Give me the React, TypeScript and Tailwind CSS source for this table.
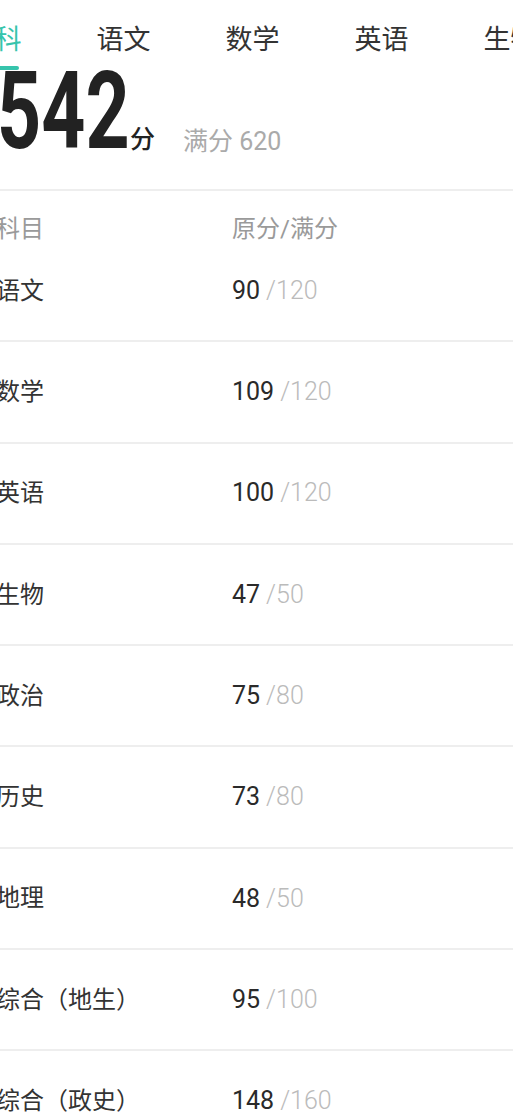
const tabs = ['全科', '语文', '数学', '英语', '生物', '政治'];

const rows = [
  { name: '语文', score: 90, full: 120 },
  { name: '数学', score: 109, full: 120 },
  { name: '英语', score: 100, full: 120 },
  { name: '生物', score: 47, full: 50 },
  { name: '政治', score: 75, full: 80 },
  { name: '历史', score: 73, full: 80 },
  { name: '地理', score: 48, full: 50 },
  { name: '综合（地生）', score: 95, full: 100 },
  { name: '综合（政史）', score: 148, full: 160 },
];

export default function App() {
  return (
    <div
      className="w-[513px] h-[1112px] overflow-hidden bg-white text-[#333]"
      style={{ fontFamily: "Roboto, 'Noto Sans CJK SC', sans-serif" }}
    >
      {/* tabs */}
      <div className="flex -ml-[70px] h-[72px]">
        {tabs.map((t, i) => (
          <div key={t} className="w-[129px] shrink-0 flex flex-col items-center">
            <div
              className={`mt-[22px] text-[27px] leading-[36px] ${i === 0 ? 'text-[#36c4ac]' : 'text-[#333]'}`}
            >
              {t}
            </div>
            {i === 0 && <div className="mt-[8px] w-[48px] h-[4px] rounded-full bg-[#36c4ac]" />}
          </div>
        ))}
      </div>

      {/* total */}
      <div className="-ml-[3px] flex items-baseline h-[117px] pt-[2px]">
        <span className="inline-block w-[133px]">
          <span className="inline-block origin-left scale-x-[0.72] text-[107px] font-bold leading-[76px] text-[#222]">
            542
          </span>
        </span>
        <span className="text-[25px] font-medium text-[#222] leading-none">分</span>
        <span className="ml-[28px] text-[25px] text-[#aaa] leading-none translate-y-[2px]">满分 620</span>
      </div>

      <div className="h-[2px] bg-[#eeeeee]" />

      {/* header */}
      <div className="-ml-[4px] flex h-[50px] pt-[23px] text-[24px] text-[#9a9a9a] leading-[30px]">
        <div className="w-[236px]">科目</div>
        <div>原分/满分</div>
      </div>

      {rows.map((r) => (
        <div key={r.name} className="h-[101.3px] border-b-2 border-[#eeeeee] -ml-[4px] flex items-center">
          <div className="w-[236px] text-[24px] text-[#333]">{r.name}</div>
          <div className="text-[25px]">
            <span className="text-[#2a2a2a]">{r.score}</span>
            <span className="ml-[6px] text-[#bbb] font-light">/{r.full}</span>
          </div>
        </div>
      ))}
    </div>
  );
}
